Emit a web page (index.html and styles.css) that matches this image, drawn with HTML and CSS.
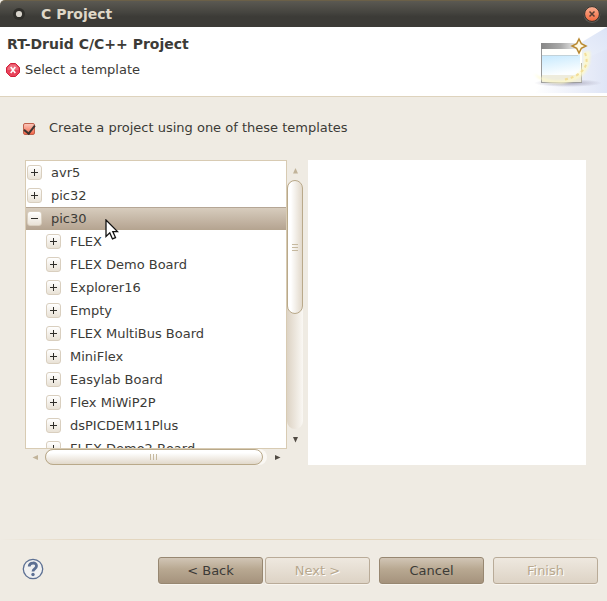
FILE: index.html
```html
<!DOCTYPE html>
<html lang="en">
<head>
<meta charset="utf-8">
<title>C Project</title>
<link rel="stylesheet" href="styles.css">
</head>
<body>
<div class="window">
  <header class="titlebar">
    <svg class="window-menu" width="14" height="14" viewBox="0 0 14 14"><circle cx="7" cy="7" r="6" fill="#2f2e2a"/><circle cx="7" cy="7" r="3.1" fill="#d8d4cc"/></svg>
    <span class="window-title">C Project</span>
    <button class="close" aria-label="Close">
      <svg width="18" height="18" viewBox="0 0 18 18">
        <defs><linearGradient id="closeFill" x2="0" y2="1"><stop stop-color="#fbb093"/><stop offset="1" stop-color="#f0673c"/></linearGradient></defs>
        <circle cx="9" cy="9.5" r="8.4" fill="#5b5a55"/><circle cx="9" cy="9" r="7.4" fill="url(#closeFill)" stroke="#31302c"/><path d="M6.500 6.500l5 5m0-5l-5 5" stroke="#573d33" stroke-width="1.500"/>
      </svg>
    </button>
  </header>

  <section class="banner">
    <div class="banner-text">
      <h1>RT-Druid C/C++ Project</h1>
      <p class="message">
        <svg width="14" height="14" viewBox="0 0 14 14"><path d="M4.500.5h5l4 4v5l-4 4h-5l-4-4v-5z" fill="#e8425a" stroke="#d0213a" stroke-linejoin="round"/><path d="M4.500 1.500h5L12.500 5v2h-11V5z" fill="#f08a95" opacity=".6"/><path d="M4.700 4l4.600 6m0-6l-4.600 6" stroke="#fff" stroke-width="1.600"/></svg>
        <span>Select a template</span>
      </p>
    </div>
    <svg class="banner-art" width="75" height="66" viewBox="0 0 75 66">
      <defs>
        <linearGradient id="ray" x1="1" y1="0" x2=".1" y2="1"><stop stop-color="#dce4f6"/><stop offset="1" stop-color="#fff"/></linearGradient>
        <linearGradient id="bar" x2="1"><stop stop-color="#868686"/><stop offset=".55" stop-color="#aaa"/><stop offset="1" stop-color="#eee"/></linearGradient>
        <linearGradient id="pane" x2=".3" y2="1"><stop stop-color="#c4e8fd"/><stop offset="1" stop-color="#fbfeff"/></linearGradient>
        <linearGradient id="floor" x2="1"><stop stop-color="#fff"/><stop offset="1" stop-color="#dfe5f6"/></linearGradient>
        <radialGradient id="shade"><stop stop-color="#aaa9bd"/><stop offset="1" stop-color="#aaa9bd" stop-opacity="0"/></radialGradient>
        <filter id="glow"><feGaussianBlur stdDeviation="1"/></filter>
      </defs>
      <path d="M75 0v66H0L50 15z" fill="url(#ray)"/>
      <path d="M75 22v44H2l50-34z" fill="url(#floor)"/>
      <ellipse cx="36" cy="56" rx="34" ry="4" fill="url(#shade)"/>
      <path d="M9 16h41v40H9z" fill="#fffffc"/>
      <path d="M9 16h36v6H9z" fill="url(#bar)"/>
      <path d="M9.500 22v34" stroke="#999"/>
      <path d="M49.500 36v20" stroke="#b5b5a8"/>
      <path d="M10 28h38v20H10z" fill="url(#pane)"/><path d="M10 28.500h36" stroke="#c2d2d8"/>
      <path d="M10 48h39v7H10z" fill="#eeecdd"/>
      <path d="M9 55.500h41" stroke="#9c9c9c"/>
      <path d="M51 25q4 20-14 27Q20 57 2 47q9 11 30 9.500Q61 51 58 24z" fill="#fffac8" opacity=".8" filter="url(#glow)"/>
      <path d="M53 26q4 10-2 17-7 8-21 10" fill="none" stroke="#f3de98" stroke-width="2" stroke-dasharray="3 3"/>
      <path d="M47 12l2.300 4.700L54 19l-4.700 2.300L47 26l-2.300-4.700L40 19l4.700-2.300z" fill="#fffae5" stroke="#b98a32" stroke-width="1.500"/>
    </svg>
  </section>

  <main class="content">
    <label class="use-template"><input type="checkbox" checked><span>Create a project using one of these templates</span></label>
    <div class="panes">
      <div class="tree-pane">
        <ul class="tree">
          <li><button class="expander" aria-label="Expand"></button>avr5</li>
          <li><button class="expander" aria-label="Expand"></button>pic32</li>
          <li class="selected"><button class="expander open" aria-label="Collapse"></button>pic30
            <svg class="cursor" width="14" height="22" viewBox="0 0 14 22"><path d="M1 1v16.500l3.800-3.600 2.700 6 3-1.300-2.700-6H12.500z" fill="#fff" stroke="#111" stroke-width="1.300"/></svg>
          </li>
          <li class="child"><button class="expander" aria-label="Expand"></button>FLEX</li>
          <li class="child"><button class="expander" aria-label="Expand"></button>FLEX Demo Board</li>
          <li class="child"><button class="expander" aria-label="Expand"></button>Explorer16</li>
          <li class="child"><button class="expander" aria-label="Expand"></button>Empty</li>
          <li class="child"><button class="expander" aria-label="Expand"></button>FLEX MultiBus Board</li>
          <li class="child"><button class="expander" aria-label="Expand"></button>MiniFlex</li>
          <li class="child"><button class="expander" aria-label="Expand"></button>Easylab Board</li>
          <li class="child"><button class="expander" aria-label="Expand"></button>Flex MiWiP2P</li>
          <li class="child"><button class="expander" aria-label="Expand"></button>dsPICDEM11Plus</li>
          <li class="child"><button class="expander" aria-label="Expand"></button>FLEX Demo2 Board</li>
        </ul>
        <div class="scroll vertical">
          <button class="arrow off" aria-label="Scroll up"><svg width="7" height="7" viewBox="0 0 7 7"><path d="M3.500 1L6 6.500H1z"/></svg></button>
          <div class="trough"><div class="thumb"><i></i><i></i><i></i></div></div>
          <button class="arrow" aria-label="Scroll down"><svg width="7" height="7" viewBox="0 0 7 7"><path d="M1 1h5l-2.500 5.500z"/></svg></button>
        </div>
        <div class="scroll horizontal">
          <button class="arrow off" aria-label="Scroll left"><svg width="7" height="7" viewBox="0 0 7 7"><path d="M6 1v5L.5 3.500z"/></svg></button>
          <div class="trough"><div class="thumb"><i></i><i></i><i></i></div></div>
          <button class="arrow" aria-label="Scroll right"><svg width="7" height="7" viewBox="0 0 7 7"><path d="M1 1v5l5.500-2.500z"/></svg></button>
        </div>
      </div>
      <div class="description"></div>
    </div>
  </main>

  <footer class="actions">
    <button class="help" aria-label="Help">
      <svg width="22" height="22" viewBox="0 0 22 22"><circle cx="11" cy="11" r="9.700" fill="#f1f1f1" stroke="#5d7093" stroke-width="1.300"/><path d="M7.200 8.500C7.400 3.900 14.500 4 14.500 8c0 2.900-3.500 2.700-3.500 5.400" fill="none" stroke="#5d7093" stroke-width="2.800"/><circle cx="11" cy="16.500" r="1.700" fill="#5d7093"/></svg>
    </button>
    <div class="nav"><button class="push">&lt; Back</button><button class="push" disabled>Next &gt;</button></div>
    <button class="push">Cancel</button>
    <button class="push" disabled>Finish</button>
  </footer>
</div>
</body>
</html>
```
FILE: styles.css
```css
* { box-sizing: border-box; }

body {
  margin: 0;
  background: #efebe3;
  color: #3c3b37;
  font: 13px/16px "DejaVu Sans", sans-serif;
}

button {
  padding: 0;
  border: 0;
  background: none;
  color: inherit;
  font: inherit;
}

svg { display: block; }

.window {
  display: flex;
  flex-direction: column;
  min-height: 100vh;
}

.titlebar {
  display: flex;
  align-items: center;
  height: 27px;
  padding: 0 6px 0 12px;
  border-top: 1px solid #6b6048;
  border-radius: 5px 0 0;
  background: linear-gradient(#5b5952, #45443f 45%, #3c3b37 60%);
  color: #dfd8c8;
  font-size: 14px;
  font-weight: bold;
}

.window-title { margin-left: 15px; }
.close { margin-left: auto; }

.banner {
  display: flex;
  justify-content: space-between;
  height: 70px;
  border-bottom: 1px solid #ded3bd;
  background: #fff;
}

.banner-text { padding: 9px 0 0 7px; }

h1 {
  margin: 0 0 10px;
  font-size: 14px;
  line-height: 16px;
}

.message {
  display: flex;
  align-items: center;
  gap: 5px;
  margin: 0 0 0 -1px;
}

.content {
  display: flex;
  flex: 1;
  flex-direction: column;
  padding: 23px 21px 74px 25px;
}

.use-template {
  display: flex;
  align-items: center;
  gap: 14px;
  margin: 0 0 24px -2px;
}

.use-template input {
  appearance: none;
  display: grid;
  place-items: center;
  width: 12px;
  height: 12px;
  margin: 1px 0 0;
  border: 1px solid #c0604c;
  border-radius: 2px;
  background: linear-gradient(#fbc5b8, #f4674a);
}

.use-template input::after {
  content: "";
  width: 5px;
  height: 9px;
  border: solid #3b3430;
  border-width: 0 2px 2px 0;
  transform: translateY(-1px) rotate(38deg);
}

.panes {
  display: grid;
  flex: 1;
  grid-template-columns: 1fr 1fr;
  gap: 5px;
}

.tree-pane {
  display: grid;
  grid-template: minmax(0, 1fr) 16px / minmax(0, 1fr) 16px;
  min-height: 305px;
}

.tree {
  height: 0;
  min-height: 100%;
  margin: 0;
  padding: 0;
  overflow: hidden;
  border: 1px solid #d8cbb3;
  background: #fff;
  list-style: none;
}

.tree li {
  display: flex;
  align-items: center;
  gap: 9px;
  height: 23px;
  padding-left: 1px;
}

.tree .child { padding-left: 20px; }

.tree .selected {
  position: relative;
  z-index: 1;
  border-top: 1px solid #b5a695;
  border-bottom: 1px solid #b5a590;
  background: linear-gradient(#d7ccbd, #b6a592);
}

.cursor {
  position: absolute;
  top: 11px;
  left: 79px;
}

.expander {
  flex: none;
  width: 15px;
  height: 15px;
  border: 1px solid #d9cfbf;
  border-radius: 3px;
  background:
    linear-gradient(#2f2e2a, #2f2e2a) center / 7px 1px no-repeat,
    linear-gradient(#2f2e2a, #2f2e2a) center / 1px 7px no-repeat,
    linear-gradient(#fff, #e9e2d6);
}

.expander.open {
  background:
    linear-gradient(#2f2e2a, #2f2e2a) center / 7px 1px no-repeat,
    linear-gradient(#fff, #e9e2d6);
}

.scroll,
.thumb { display: flex; }

.vertical,
.vertical .thumb { flex-direction: column; }

.trough {
  flex: 1;
  border-radius: 8px;
}

.vertical .trough { background: linear-gradient(90deg, #ddd3c4, #faf8f4); }
.horizontal .trough { background: linear-gradient(90deg, #ddd3c4, #faf8f4); }

.thumb {
  align-items: center;
  justify-content: center;
  gap: 2px;
  border: 1px solid #b9a98a;
  border-radius: 8px;
}

.vertical .thumb {
  height: 54%;
  background: linear-gradient(90deg, #fff 20%, #e2d9cb);
}

.horizontal .thumb {
  width: 98%;
  height: 16px;
  background: linear-gradient(#fff 20%, #e2d9cb);
}

.thumb i { background: #c6b99f; }
.vertical i { width: 6px; height: 1px; }
.horizontal i { width: 1px; height: 6px; }

.arrow {
  display: flex;
  align-items: center;
  justify-content: center;
  width: 20px;
  height: 20px;
  fill: #514b43;
}

.vertical .arrow { width: 16px; }
.horizontal .arrow { height: 16px; }
.arrow.off { fill: #c1b399; }

.description { background: #fff; }

.actions {
  display: flex;
  align-items: flex-start;
  gap: 9px;
  padding: 17px 9px 17px 22px;
  border-top: 1px solid;
  border-image: linear-gradient(90deg, #efebe3, #e3d6bf 15%, #e3d6bf 80%, #efebe3) 1;
}

.help { margin: 1px auto 0 0; }

.nav {
  display: flex;
  gap: 2px;
}

.push {
  width: 105px;
  height: 27px;
  border: 1px solid #978771;
  border-radius: 3px;
  background: linear-gradient(#d1c5b5, #b8a891 45%, #a5937d);
  box-shadow: 0 1px #f8f5ef;
}

.push:disabled {
  border-color: #b9ab98;
  background: linear-gradient(#eee8df, #ddd3c5);
  color: #b8a88e;
  text-shadow: 1px 1px #fff;
}
```
